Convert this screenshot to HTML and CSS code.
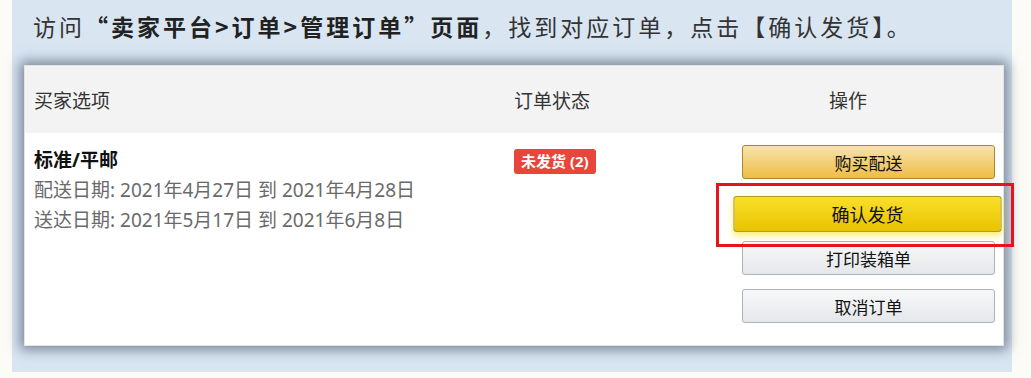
FILE: index.html
```html
<!DOCTYPE html>
<html lang="zh-CN">
<head>
    <meta charset="UTF-8">
    <meta name="viewport" content="width=device-width, initial-scale=1.0">
    <title>确认发货</title>
    <link rel="stylesheet" href="styles.css">
</head>
<body>

    <div class="panel">
        <h1 class="tip">访问<b>“卖家平台&gt;订单&gt;管理订单”页面</b>，找到对应订单，点击【确认发货】。</h1>

        <div class="card">
            <div class="row head">
                <div class="col-opt">买家选项</div>
                <div class="col-status">订单状态</div>
                <div class="col-act">操作</div>
            </div>

            <div class="row order">
                <div class="col-opt">
                    <div class="ship">标准/平邮</div>
                    <div class="date">配送日期: 2021年4月27日 到 2021年4月28日</div>
                    <div class="date">送达日期: 2021年5月17日 到 2021年6月8日</div>
                </div>
                <div class="col-status">
                    <span class="badge">未发货 (2)</span>
                </div>
                <div class="col-act actions">
                    <button class="btn btn-buy">购买配送</button>
                    <div class="highlight">
                        <button class="btn btn-confirm">确认发货</button>
                    </div>
                    <button class="btn btn-plain">打印装箱单</button>
                    <button class="btn btn-plain">取消订单</button>
                </div>
            </div>
        </div>
    </div>

</body>
</html>
```

FILE: styles.css
```css
* {
    margin: 0;
    padding: 0;
    box-sizing: border-box;
    font-family: "Noto Sans", "Noto Sans CJK SC", sans-serif;
}

body {
    background: #fcfcf7;
}

.panel {
    margin-left: 12px;
    width: 1000px;
    height: 372px;
    padding: 11px 0 0 12px;
    background: #d9e6f2;
}

/* 标题用中文字体，引号才是全角 */
.tip,
.tip b {
    font-family: "Noto Sans CJK SC", sans-serif;
}

.tip {
    padding-left: 9px;
    font-size: 23px;
    font-weight: normal;
    line-height: 30px;
    letter-spacing: 3px;
    color: #333;
}

.tip b {
    font-weight: bold;
    color: #222;
}

.card {
    margin-top: 24px;
    width: 980px;
    background: #fff;
    border: 1px solid #e4e4e4;
    box-shadow: 0 0 12px 4px rgba(60, 70, 95, 0.6);
    padding-bottom: 22px;
}

.row {
    display: grid;
    grid-template-columns: 480px 187px 1fr;
    padding: 0 8px 0 9px;
}

.head {
    height: 67px;
    align-items: center;
    background: #f3f3f3;
    font-size: 19px;
    color: #333;
}

.head .col-act {
    text-align: center;
}

.order {
    padding-top: 12px;
    font-size: 19px;
    line-height: 30px;
}

.ship {
    font-weight: bold;
    color: #111;
}

.date {
    color: #6a6a6a;
}

.badge {
    display: inline-block;
    margin-top: 1px;
    padding: 0 7px;
    height: 25px;
    line-height: 25px;
    border-radius: 3px;
    background: #e8463a;
    color: #fff;
    font-size: 15px;
    font-weight: bold;
}

.actions {
    display: flex;
    flex-direction: column;
    align-items: flex-end;
    gap: 14px;
}

.btn {
    width: 253px;
    height: 34px;
    border-radius: 3px;
    font-size: 17px;
    color: #111;
    cursor: pointer;
}

.btn-buy {
    background: linear-gradient(#f8e3ad, #eebd45);
    border: 1px solid #a88734;
}

.btn-plain {
    background: linear-gradient(#f7f8fa, #e5e7ea);
    border: 1px solid #adb1b8;
}

.highlight {
    position: relative;
}

.highlight::after {
    content: "";
    position: absolute;
    top: -10px;
    right: -19px;
    bottom: -20px;
    left: -26px;
    border: 3px solid #e8141c;
}

.btn-confirm {
    display: block;
    background: linear-gradient(#f9df2a, #e8c300);
    border: 1px solid #b39a1e;
    transform: translate(-1px, 4px) scale(1.06);
    box-shadow: 0 3px 6px rgba(255, 225, 0, 0.55);
}
```
